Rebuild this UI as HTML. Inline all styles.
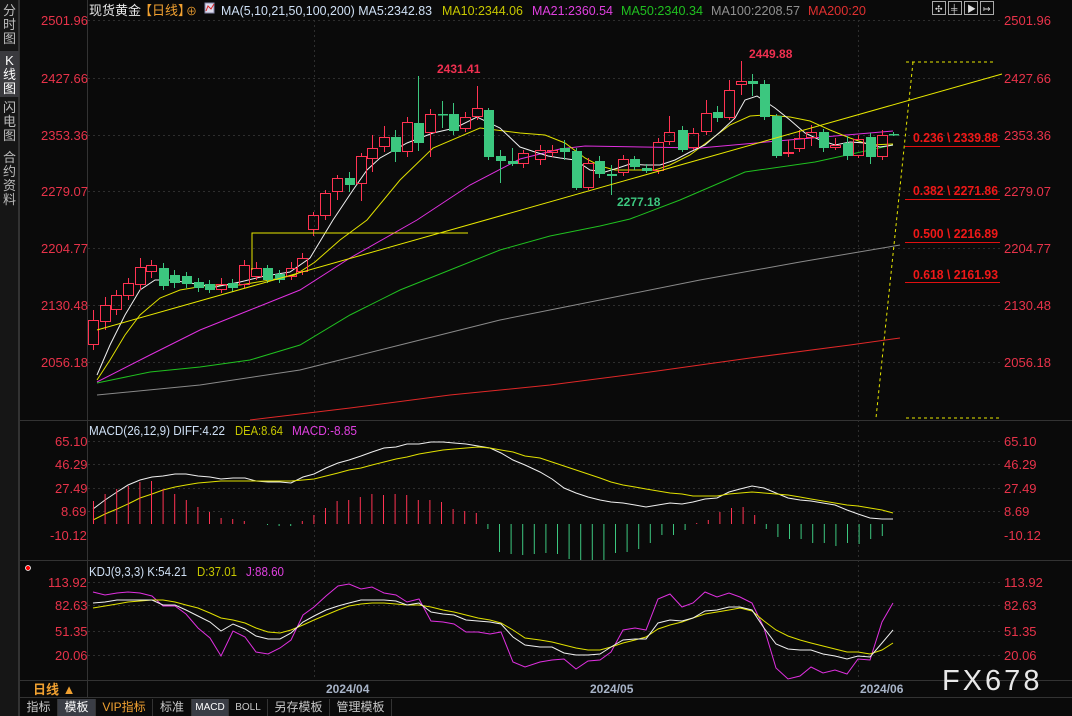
<!DOCTYPE html>
<html><head><meta charset="utf-8"><style>
*{margin:0;padding:0;box-sizing:border-box}
body{width:1072px;height:716px;background:#0a0a0a;overflow:hidden;position:relative;font-family:"Liberation Sans","Noto Sans CJK SC",sans-serif}
.side{position:absolute;left:0;top:0;width:19px;height:716px;background:#161616;border-right:1px solid #333}
.side div{color:#bbb;font-size:13px;line-height:14px;text-align:center;width:19px;position:absolute;left:0}
.tab{position:absolute;top:699px;height:17px;font-size:12px;line-height:17px;text-align:center;color:#c8c8c8;border-right:1px solid #333}
svg{position:absolute;left:0;top:0}
</style></head><body>
<div class="side">
<div style="top:4px;height:46px">分<br>时<br>图</div>
<div style="top:51px;height:46px;background:#3a3a3e;color:#fff;padding-top:3px">K<br>线<br>图</div>
<div style="top:101px;height:46px">闪<br>电<br>图</div>
<div style="top:151px;height:64px">合<br>约<br>资<br>料</div>
</div>
<svg id="s" width="1072" height="716" xmlns="http://www.w3.org/2000/svg" font-family="Liberation Sans, Noto Sans CJK SC, sans-serif">
<g stroke="#333" stroke-width="1">
<line x1="19.5" y1="0" x2="19.5" y2="716"/>
<line x1="87.5" y1="0" x2="87.5" y2="697"/>
<line x1="20" y1="420.5" x2="1072" y2="420.5"/>
<line x1="20" y1="560.5" x2="1072" y2="560.5"/>
<line x1="20" y1="680.5" x2="1072" y2="680.5"/>
<line x1="20" y1="697.5" x2="1072" y2="697.5"/>
</g>
<g stroke="#2e2e2e" stroke-dasharray="2,3">
<line x1="88" y1="20.5" x2="1000" y2="20.5"/><line x1="88" y1="78.5" x2="1000" y2="78.5"/><line x1="88" y1="135.5" x2="1000" y2="135.5"/><line x1="88" y1="191.5" x2="1000" y2="191.5"/><line x1="88" y1="248.5" x2="1000" y2="248.5"/><line x1="88" y1="305.5" x2="1000" y2="305.5"/><line x1="88" y1="362.5" x2="1000" y2="362.5"/>
<line x1="88" y1="441.5" x2="1000" y2="441.5"/><line x1="88" y1="464.5" x2="1000" y2="464.5"/><line x1="88" y1="488.5" x2="1000" y2="488.5"/><line x1="88" y1="511.5" x2="1000" y2="511.5"/>
<line x1="88" y1="582.5" x2="1000" y2="582.5"/><line x1="88" y1="605.5" x2="1000" y2="605.5"/><line x1="88" y1="631.5" x2="1000" y2="631.5"/><line x1="88" y1="655.5" x2="1000" y2="655.5"/>
<line x1="314.5" y1="20" x2="314.5" y2="680"/><line x1="858.5" y1="20" x2="858.5" y2="680"/>
</g>
<g fill="#e8334a" font-size="13">
<text x="41" y="25">2501.96</text><text x="41" y="83">2427.66</text><text x="41" y="140">2353.36</text><text x="41" y="196">2279.07</text><text x="41" y="253">2204.77</text><text x="41" y="310">2130.48</text><text x="41" y="367">2056.18</text>
<text x="1004" y="25">2501.96</text><text x="1004" y="83">2427.66</text><text x="1004" y="140">2353.36</text><text x="1004" y="196">2279.07</text><text x="1004" y="253">2204.77</text><text x="1004" y="310">2130.48</text><text x="1004" y="367">2056.18</text>
<text x="55" y="446">65.10</text><text x="55" y="469">46.29</text><text x="55" y="493">27.49</text><text x="61" y="516">8.69</text><text x="50" y="540">-10.12</text>
<text x="1004" y="446">65.10</text><text x="1004" y="469">46.29</text><text x="1004" y="493">27.49</text><text x="1004" y="516">8.69</text><text x="1004" y="540">-10.12</text>
<text x="48" y="587">113.92</text><text x="55" y="610">82.63</text><text x="55" y="636">51.35</text><text x="55" y="660">20.06</text>
<text x="1004" y="587">113.92</text><text x="1004" y="610">82.63</text><text x="1004" y="636">51.35</text><text x="1004" y="660">20.06</text>
</g>
<g font-size="13">
<text x="89" y="15" fill="#e8e8e8">现货黄金</text><text x="139" y="15" fill="#f0a030">【日线】</text><text x="186" y="15" fill="#f0a030" font-size="11">⊕</text>
<rect x="205" y="3" width="9" height="10" fill="#dde" stroke="#88a"/><polyline points="206,11 208,6 211,9 214,4" stroke="#d22" fill="none"/>
<text x="221" y="15" fill="#cfe0f5" textLength="211" lengthAdjust="spacingAndGlyphs">MA(5,10,21,50,100,200) MA5:2342.83</text>
<text x="442" y="15" fill="#c8c800" textLength="81" lengthAdjust="spacingAndGlyphs">MA10:2344.06</text>
<text x="532" y="15" fill="#e040e0" textLength="81" lengthAdjust="spacingAndGlyphs">MA21:2360.54</text>
<text x="621" y="15" fill="#20c020" textLength="82" lengthAdjust="spacingAndGlyphs">MA50:2340.34</text>
<text x="711" y="15" fill="#909090" textLength="89" lengthAdjust="spacingAndGlyphs">MA100:2208.57</text>
<text x="808" y="15" fill="#e03030" textLength="58" lengthAdjust="spacingAndGlyphs">MA200:20</text>
<text x="89" y="435" fill="#cfe0f5" textLength="136" lengthAdjust="spacingAndGlyphs">MACD(26,12,9) DIFF:4.22</text><text x="235" y="435" fill="#c8c800" textLength="48" lengthAdjust="spacingAndGlyphs">DEA:8.64</text><text x="292" y="435" fill="#e040e0" textLength="65" lengthAdjust="spacingAndGlyphs">MACD:-8.85</text>
<text x="89" y="576" fill="#cfe0f5" textLength="98" lengthAdjust="spacingAndGlyphs">KDJ(9,3,3) K:54.21</text><text x="197" y="576" fill="#c8c800" textLength="40" lengthAdjust="spacingAndGlyphs">D:37.01</text><text x="246" y="576" fill="#e040e0" textLength="38" lengthAdjust="spacingAndGlyphs">J:88.60</text>
</g>
<circle cx="28" cy="568" r="2.5" fill="#f00" stroke="#fff" stroke-width="0.8"/>
<g fill="none" stroke="#aaa" stroke-width="1"><rect x="932.5" y="1.5" width="13" height="13"/><rect x="948.5" y="1.5" width="13" height="13"/><rect x="964.5" y="1.5" width="13" height="13"/><rect x="980.5" y="1.5" width="13" height="13"/></g>
<g fill="#ddd" font-size="9"><text x="935" y="12">✣</text><text x="951" y="12">╪</text><text x="967" y="12">▶</text><text x="983" y="12">↦</text></g>
<g id="ma" fill="none" stroke-width="1"></g>
<g id="cd"></g>
<g fill="none" stroke-width="1">
<line x1="97" y1="330" x2="1002" y2="74" stroke="#e8e800"/>
<polyline points="252,270 252,233 468,233" stroke="#e8e800"/>
<g stroke="#e8e800" stroke-dasharray="3,3"><line x1="906" y1="62" x2="993" y2="62"/><line x1="906" y1="418" x2="1000" y2="418"/><line x1="913" y1="62" x2="876" y2="418"/></g>
<g stroke="#e01010"><line x1="905" y1="146.5" x2="1000" y2="146.5"/><line x1="905" y1="199.5" x2="1000" y2="199.5"/><line x1="905" y1="242.5" x2="1000" y2="242.5"/><line x1="905" y1="282.5" x2="1000" y2="282.5"/></g>
</g>
<g fill="#f01818" font-size="13" font-weight="bold"><text x="913" y="142" textLength="85" lengthAdjust="spacingAndGlyphs">0.236 \ 2339.88</text><text x="913" y="195" textLength="85" lengthAdjust="spacingAndGlyphs">0.382 \ 2271.86</text><text x="913" y="238" textLength="85" lengthAdjust="spacingAndGlyphs">0.500 \ 2216.89</text><text x="913" y="279" textLength="85" lengthAdjust="spacingAndGlyphs">0.618 \ 2161.93</text></g>
<g font-size="12" font-weight="bold"><text x="437" y="73" fill="#f03050">2431.41</text><text x="749" y="58" fill="#f03050">2449.88</text><text x="617" y="206" fill="#3cc77f">2277.18</text></g>
<g font-size="12" font-weight="bold" fill="#a8b4c8"><text x="326" y="693">2024/04</text><text x="590" y="693">2024/05</text><text x="860" y="693">2024/06</text></g>
<text x="33" y="694" fill="#f0a030" font-size="13" font-weight="bold">日线 ▲</text>
<text x="942" y="690" fill="#e8e8e8" font-size="29" letter-spacing="3">FX678</text>
</svg>
<div class="tab" style="left:20px;width:38px">指标</div>
<div class="tab" style="left:58px;width:38px;background:#3a3d45;color:#fff">模板</div>
<div class="tab" style="left:96px;width:57px;color:#f0a030">VIP指标</div>
<div class="tab" style="left:153px;width:39px">标准</div>
<div class="tab" style="left:192px;width:37px;background:#3a3d45;color:#fff;font-size:10px">MACD</div>
<div class="tab" style="left:229px;width:39px;font-size:10px">BOLL</div>
<div class="tab" style="left:268px;width:62px">另存模板</div>
<div class="tab" style="left:330px;width:62px">管理模板</div>
<script>
const NS="http://www.w3.org/2000/svg";
function el(p,t,a){const e=document.createElementNS(NS,t);for(const k in a)e.setAttribute(k,a[k]);p.appendChild(e);return e;}
const ma=document.getElementById('ma'),cd=document.getElementById('cd');
function pl(pts,c){el(ma,'polyline',{points:pts,stroke:c});}
pl("250,420 350,408 450,395 550,385 650,372 750,358 850,345 900,338","#e02828");
pl("97,395 200,385 300,370 400,345 500,320 600,300 700,280 800,262 900,245","#8a8a8a");
pl("97,383 150,372 200,367 250,360 300,345 350,315 400,290 450,270 500,250 550,236 600,226 630,219 680,200 745,172 815,162 893,145","#20c020");
pl("97,382 150,355 200,330 250,310 300,290 350,258 417,220 470,185 520,159 560,149 585,146 700,148 800,139 893,131","#e030e0");
pl("97,380 110,360 125,335 140,315 160,298 180,290 210,285 240,285 270,280 295,275 315,262 340,240 367,220 400,180 433,148 480,128 520,133 545,135 565,143 585,158 600,166 615,170 635,170 655,170 670,165 690,155 710,140 730,125 750,116 765,115 790,117 810,121 830,130 850,138 870,145 893,144","#e0e000");
pl("97,375 110,345 125,315 140,290 155,280 170,280 190,283 215,287 240,282 265,276 290,272 310,258 333,220 353,190 367,170 380,158 407,143 433,133 455,128 477,117 500,128 520,147 535,152 548,156 560,158 575,160 590,170 605,172 618,168 630,164 645,165 660,165 675,160 690,152 705,145 720,132 735,118 745,100 757,96 775,108 790,120 805,133 820,140 835,145 850,142 865,143 880,147 893,145","#f0f0f0");
const C=[[93,345,320,310,350],[105,322,305,297,330],[116,310,295,290,315],[128,296,283,278,300],[140,285,267,258,290],[151,272,265,260,278],[163,268,286,263,290],[174,275,283,270,288],[186,276,284,272,288],[198,282,288,278,292],[209,284,290,280,293],[221,290,284,278,293],[232,283,288,279,292],[244,285,265,260,288],[256,277,268,262,280],[267,268,280,265,283],[279,274,280,270,283],[291,277,268,262,280],[302,272,258,253,275],
[313,230,215,212,236],[325,216,193,190,220],[337,192,178,175,200],[349,178,185,172,192],[361,184,156,153,201],[372,159,148,135,172],[384,147,137,126,152],[395,137,152,130,162],[407,152,122,117,157],[418,123,143,76,151],[430,133,114,109,157],[442,114,114,101,128],[453,114,131,103,135],[465,129,117,112,132],[477,117,108,86,120],[488,110,157,108,160],[500,156,161,150,183],[512,161,164,148,166],[523,164,153,150,168],[540,160,150,145,165],[552,153,150,145,157],[564,148,152,140,160],
[576,151,188,148,190],[588,188,163,158,190],[599,161,174,156,178],[611,174,176,165,195],[623,173,159,155,176],[634,159,167,156,170],[646,168,171,164,173],[658,171,142,138,174],[669,142,132,116,145],[682,130,150,126,152],[693,148,133,128,150],[706,132,113,100,135],[717,112,118,106,122],[729,118,90,80,120],[741,85,81,61,95],[752,81,84,74,96],[764,84,117,80,120],[776,116,156,114,158],[788,154,152,140,157],[799,149,138,130,152],[811,138,132,125,146],[823,132,148,129,152],[835,148,145,138,150],[847,143,156,136,160],[858,156,139,135,158],[870,137,157,133,164],[882,157,135,130,160],[893,134,134,132,136]];
const R="#ff3352",G="#3cc77f";
C.forEach(([x,o,c,h,l])=>{const up=c<o;const col=up?R:G;const t=Math.min(o,c),b=Math.max(o,c);
el(cd,'line',{x1:x+.5,y1:h,x2:x+.5,y2:t,stroke:col});el(cd,'line',{x1:x+.5,y1:b,x2:x+.5,y2:l,stroke:col});
if(up)el(cd,'rect',{x:x-4.5,y:t+.5,width:10,height:Math.max(b-t-1,1),fill:'none',stroke:col});else el(cd,'rect',{x:x-4,y:t,width:10,height:Math.max(b-t,1.5),fill:col});});
const hr=[501,494,489,486,482,481,489,494,500,507,512,518,519,521,524,525,526,526,521,515,508,501,500,497,494,495,494,495,500,500,502,509,511,513,529,552,554,555,554,553,554,559,560,560,560,553,552,549,543,535,535,530,523,520,512,508,507,515,529,537,539,539,543,543,546,543,544,539,536];
hr.forEach((v,i)=>{const x=93+i*11.6+.5;el(cd,'line',{x1:x,y1:524,x2:x,y2:v,stroke:v<524?R:G});});
pl("93,509 105,500 117,492 128,485 140,480 152,477 163,476 175,474 186,474 198,476 210,477 221,479 233,478 245,478 256,481 268,482 280,482 291,483 303,477 314,474 326,468 338,463 349,460 361,456 372,452 384,448 396,447 407,444 419,444 431,442 443,442 454,443 466,444 478,446 490,448 501,453 513,460 525,465 540,472 552,479 564,488 576,493 588,497 600,500 611,502 623,503 635,505 646,507 658,505 670,503 682,504 693,502 705,499 717,498 729,492 740,489 752,486 764,488 776,493 788,498 800,500 811,501 823,503 835,505 847,510 858,514 870,518 882,519 893,519","#f0f0f0");
pl("93,520 105,514 117,509 128,504 140,498 152,494 163,490 175,487 186,485 198,483 210,482 221,481 245,481 291,481 303,480 314,479 326,476 338,473 349,470 361,468 372,465 384,462 396,459 407,457 419,454 431,452 443,450 454,449 466,448 478,447 490,448 501,450 513,452 525,456 540,458 552,462 564,466 576,470 588,474 600,478 611,482 623,485 635,487 646,489 658,491 670,493 682,494 693,496 717,496 729,494 752,492 764,493 776,494 788,495 800,497 811,499 823,501 835,503 847,505 858,506 870,508 882,510 893,513","#e0e000");
pl("93,592 105,595 117,593 128,592 140,593 152,596 163,606 175,606 186,614 198,628 210,638 221,656 233,631 245,637 256,652 268,654 280,648 291,640 303,615 314,607 326,596 338,586 349,584 361,589 372,587 384,593 396,595 407,602 419,599 431,621 443,622 454,624 466,632 478,632 490,634 501,632 513,662 525,667 540,662 552,660 564,659 576,669 588,661 600,660 611,652 623,630 635,628 646,630 658,599 670,594 682,607 693,603 705,592 717,597 729,593 740,597 752,603 764,628 776,668 788,679 800,676 811,667 823,673 835,670 847,674 858,659 870,660 882,622 893,603","#e030e0");
pl("93,608 105,606 117,604 128,602 140,601 152,600 163,600 175,602 186,605 198,608 210,613 221,618 233,620 245,623 256,628 268,632 280,633 291,630 303,625 314,620 326,615 338,610 349,606 361,604 372,603 384,603 396,604 407,605 419,605 431,607 443,610 454,612 466,615 478,618 490,620 501,623 513,630 525,638 540,640 552,642 564,645 576,648 588,650 600,650 611,647 623,643 635,640 646,637 658,629 670,625 682,622 693,618 705,614 717,612 729,610 740,608 752,611 764,621 776,630 788,636 800,640 811,643 823,646 835,649 847,652 858,652 870,654 882,650 893,643","#e0e000");
pl("93,603 105,602 117,600 152,600 163,605 175,605 186,610 198,616 210,622 221,631 233,624 245,629 256,636 268,639 280,639 291,633 303,622 314,616 326,610 338,606 349,603 361,600 384,600 396,601 407,605 419,603 431,612 443,614 454,615 466,620 478,621 490,622 501,624 513,637 525,645 540,647 552,647 564,653 576,655 588,655 600,654 611,647 623,640 635,639 646,639 658,623 670,620 682,621 693,618 705,611 717,610 729,607 740,607 752,610 764,628 776,644 788,649 800,650 811,650 823,654 835,656 847,659 858,656 870,657 882,643 893,630","#f0f0f0");
</script>
</body></html>
